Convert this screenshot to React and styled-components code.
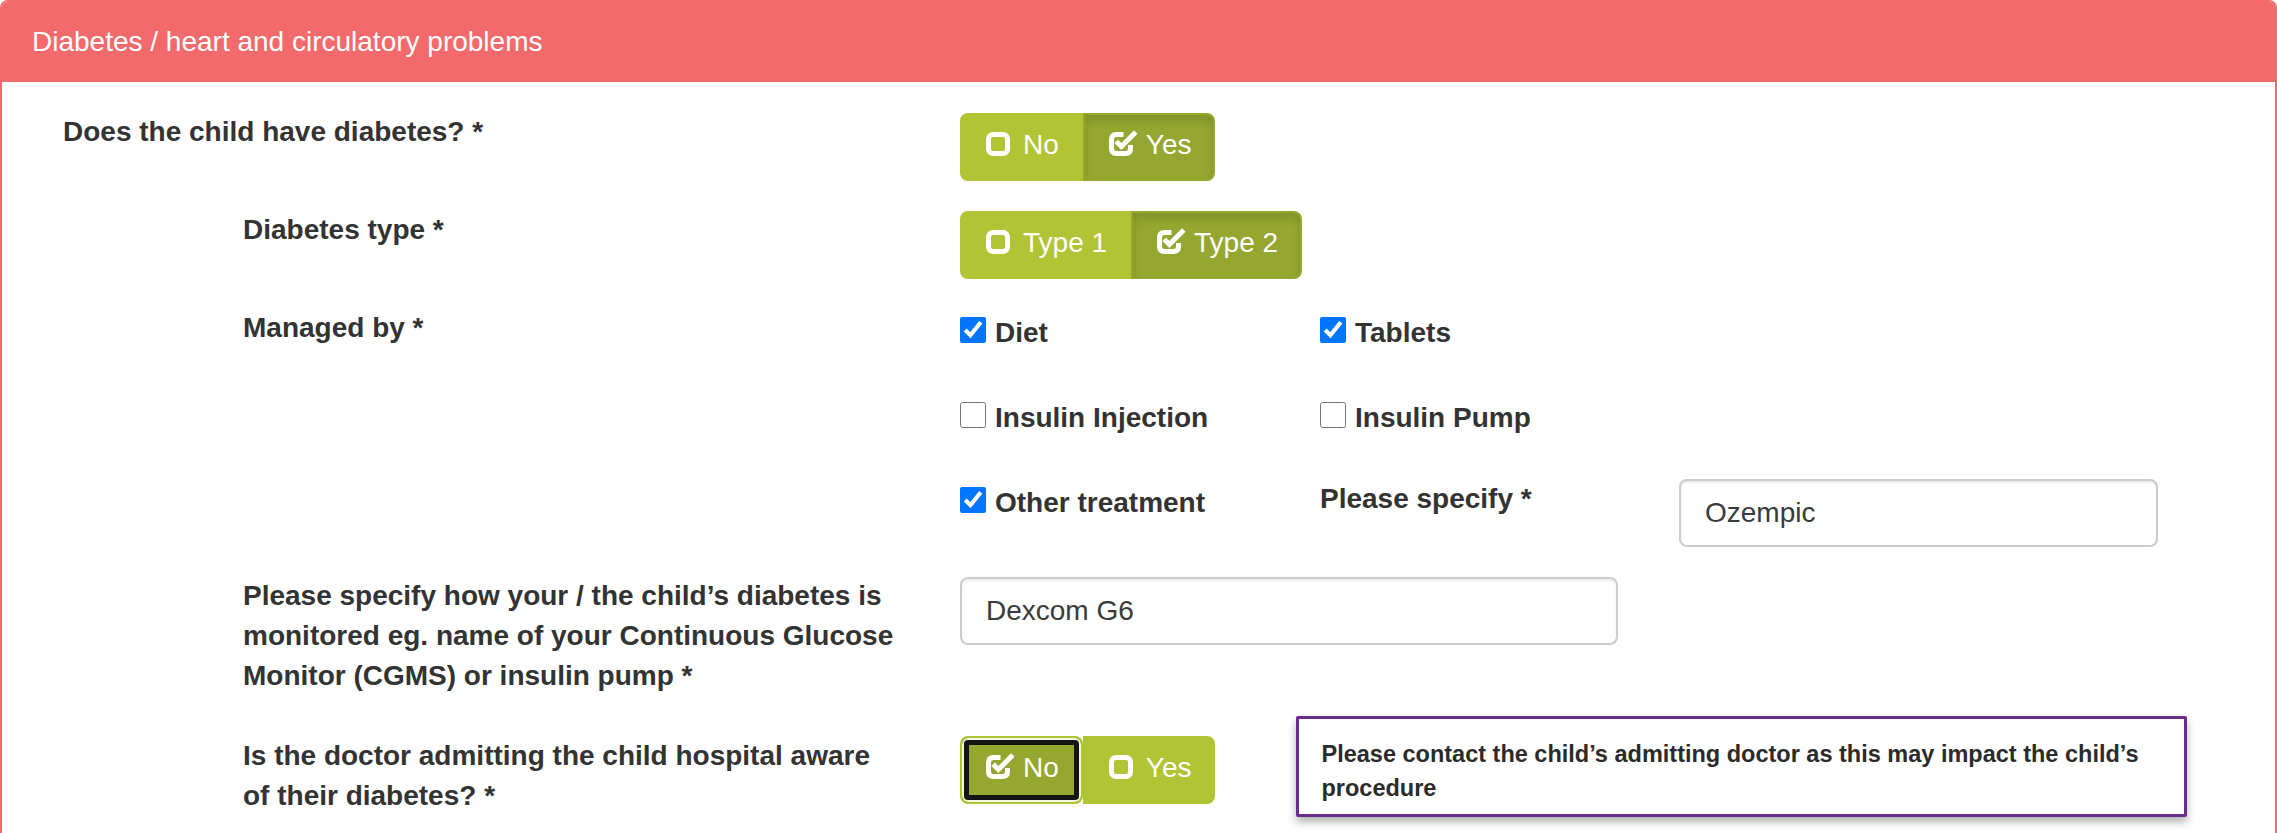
import React from 'react';
import styled, {createGlobalStyle, css} from 'styled-components';

const GlobalStyle = createGlobalStyle`
  body {
    margin: 0;
    background: #ffffff;
    font-family: "Liberation Sans", Arial, Helvetica, sans-serif;
    color: #333333;
  }
`;

const Panel = styled.section`
  border: 2px solid #f26a6c;
  border-bottom: none;
  border-radius: 8px 8px 0 0;
  background: #ffffff;
`;

const PanelHeading = styled.header`
  background: #f26a6c;
  color: #ffffff;
  font-size: 28px;
  line-height: 40px;
  padding: 20px 30px;
  border-radius: 6px 6px 0 0;
`;

const PanelBody = styled.div`
  padding: 31px 0 40px;
  display: flex;
  flex-direction: column;
`;

const FormRow = styled.div`
  display: grid;
  grid-template-columns: 958px 1fr;
  align-items: start;
  margin-bottom: ${p => p.$gap || 30}px;
`;

const Label = styled.div`
  font-size: 28px;
  line-height: 40px;
  font-weight: bold;
  color: #333333;
  padding-left: ${p => (p.$nested ? 241 : 61)}px;
  padding-right: 62px;
  margin-top: -1px;
`;

const Controls = styled.div`
  display: flex;
  align-items: flex-start;
`;

const ToggleGroup = styled.div`
  display: inline-flex;
  margin-top: ${p => p.$offset || 0}px;
`;

const ToggleButton = styled.button`
  display: inline-flex;
  align-items: center;
  height: 68px;
  padding: 10px 22px 14px 24px;
  font-family: inherit;
  font-size: 28px;
  line-height: 40px;
  color: #ffffff;
  background: #b0c436;
  border: 2px solid #b0c436;
  border-radius: 0;
  cursor: pointer;

  &:first-child {
    border-radius: 8px 0 0 8px;
  }
  &:last-child {
    border-radius: 0 8px 8px 0;
  }

  ${p => p.$active && css`
    background: #95a730;
    border-color: #95a730;
    box-shadow: inset 0 6px 10px rgba(0, 0, 0, 0.13);
  `}

  ${p => p.$focused && css`
    background: #95a730;
    border-color: #b0c436;
    border-radius: 8px !important;
    box-shadow: inset 0 0 0 2px #f4f7dc, inset 0 0 0 7px #141414;
  `}
`;

const IconSvg = styled.svg`
  flex: none;
  margin-right: ${p => p.$space}px;
  margin-bottom: ${p => p.$lift}px;
`;

const SquareIcon = () => (
  <IconSvg width="24" height="24" viewBox="0 0 24 24" $space={13} $lift={3}>
    <rect x="2.5" y="2.5" width="19" height="19" rx="4.5" fill="none" stroke="#ffffff" strokeWidth="5"/>
  </IconSvg>
);

const CheckSquareIcon = () => (
  <IconSvg width="29" height="27" viewBox="0 0 29 27" $space={8} $lift={5}>
    <path d="M14.5 5.5H7.5Q2.5 5.5 2.5 10.5V19.5Q2.5 24.5 7.5 24.5H16.5Q21.5 24.5 21.5 19.5V16"
          fill="none" stroke="#ffffff" strokeWidth="5"/>
    <path d="M7.2 12.3L12.4 17.5L26.8 3" fill="none" stroke="#ffffff" strokeWidth="5"/>
  </IconSvg>
);

const Toggle = ({options, value, focused, offset}) => (
  <ToggleGroup $offset={offset}>
    {options.map(option => {
      const selected = option === value;
      return (
        <ToggleButton
          key={option}
          type="button"
          $active={selected && !focused}
          $focused={selected && focused}
        >
          {selected ? <CheckSquareIcon/> : <SquareIcon/>}
          {option}
        </ToggleButton>
      );
    })}
  </ToggleGroup>
);

const ManagedGrid = styled.div`
  display: grid;
  grid-template-columns: 360px 359px 479px;
  grid-template-rows: 55px 55px auto;
  row-gap: 30px;
`;

const CheckItem = styled.label`
  display: flex;
  align-items: flex-start;
  gap: 9px;
  padding-top: 4px;
  font-size: 28px;
  line-height: 40px;
  font-weight: bold;
  color: #333333;
`;

const CheckBox = styled.input`
  width: 26px;
  height: 26px;
  margin: 4px 0 0;
  flex: none;
`;

const InlineLabel = styled.div`
  font-size: 28px;
  line-height: 40px;
  font-weight: bold;
  color: #333333;
`;

const TextInput = styled.input`
  box-sizing: border-box;
  width: ${p => p.$width}px;
  height: 68px;
  padding: 0 24px;
  font-family: inherit;
  font-size: 28px;
  color: #3a3a3a;
  background: #ffffff;
  border: 2px solid #cccccc;
  border-radius: 8px;
  box-shadow: inset 0 2px 2px rgba(0, 0, 0, 0.075);
  outline: none;
`;

const Alert = styled.div`
  width: 891px;
  box-sizing: border-box;
  margin-left: 81px;
  margin-top: -21px;
  padding: 18px 20px 9px 22px;
  border: 3px solid #6a2c8e;
  border-radius: 2px;
  background: #ffffff;
  box-shadow: 0 5px 8px rgba(0, 0, 0, 0.3);
  font-size: 23.5px;
  line-height: 34px;
  font-weight: bold;
  color: #2b2b2b;
`;

const managedOptions = [
  {label: 'Diet', checked: true},
  {label: 'Tablets', checked: true},
  {label: null},
  {label: 'Insulin Injection', checked: false},
  {label: 'Insulin Pump', checked: false},
  {label: null},
];

export default function App() {
  return (
    <>
      <GlobalStyle/>
      <Panel>
        <PanelHeading>Diabetes / heart and circulatory problems</PanelHeading>
        <PanelBody>
          <FormRow>
            <Label>Does the child have diabetes? *</Label>
            <Controls>
              <Toggle options={['No', 'Yes']} value="Yes"/>
            </Controls>
          </FormRow>

          <FormRow>
            <Label $nested>Diabetes type *</Label>
            <Controls>
              <Toggle options={['Type 1', 'Type 2']} value="Type 2"/>
            </Controls>
          </FormRow>

          <FormRow>
            <Label $nested>Managed by *</Label>
            <ManagedGrid>
              {managedOptions.map((item, i) => item.label ? (
                <CheckItem key={i}>
                  <CheckBox type="checkbox" defaultChecked={item.checked}/>
                  {item.label}
                </CheckItem>
              ) : <div key={i}/>)}
              <CheckItem>
                <CheckBox type="checkbox" defaultChecked/>
                Other treatment
              </CheckItem>
              <InlineLabel>Please specify *</InlineLabel>
              <TextInput type="text" defaultValue="Ozempic" $width={479}/>
            </ManagedGrid>
          </FormRow>

          <FormRow $gap={41}>
            <Label $nested>
              Please specify how your / the child’s diabetes is monitored eg. name of your Continuous Glucose Monitor (CGMS) or insulin pump *
            </Label>
            <Controls>
              <TextInput type="text" defaultValue="Dexcom G6" $width={658}/>
            </Controls>
          </FormRow>

          <FormRow>
            <Label $nested>Is the doctor admitting the child hospital aware of their diabetes? *</Label>
            <Controls>
              <Toggle options={['No', 'Yes']} value="No" focused offset={-1}/>
              <Alert>
                Please contact the child’s admitting doctor as this may impact the child’s procedure
              </Alert>
            </Controls>
          </FormRow>
        </PanelBody>
      </Panel>
    </>
  );
}
